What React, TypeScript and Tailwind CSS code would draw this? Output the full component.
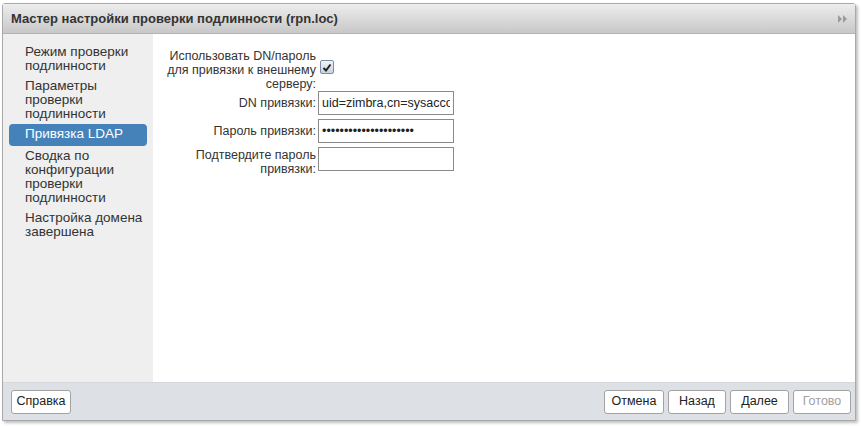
import React from 'react';

const steps = [
  { label: ['Режим проверки', 'подлинности'] },
  { label: ['Параметры', 'проверки', 'подлинности'] },
  { label: ['Привязка LDAP'], active: true },
  { label: ['Сводка по', 'конфигурации', 'проверки', 'подлинности'] },
  { label: ['Настройка домена', 'завершена'] },
];

const Btn: React.FC<{ children: React.ReactNode; disabled?: boolean; w: string }> = ({ children, disabled, w }) => (
  <button
    className={`${w} h-[24px] rounded-[3px] border border-[#a3a3a3] bg-white text-[12.5px] leading-none ${
      disabled ? 'text-[#a0a0a0]' : 'text-[#222]'
    }`}
  >
    {children}
  </button>
);

const inputCls =
  'w-[136px] h-[24px] border border-[#8a8a8a] px-[3px] text-[12.5px] text-[#222] outline-none bg-white';

export default function App() {
  return (
    <div
      className="w-[861px] h-[426px] bg-white pt-[3px] pl-[2px] overflow-hidden"
      style={{ fontFamily: '"Liberation Sans", Arial, sans-serif' }}
    >
      <div className="w-[854px] h-[418px] flex flex-col border border-[#a9a9a9] rounded-t-[3px] shadow-[2px_2px_3px_rgba(0,0,0,0.25)]">
        {/* Title bar */}
        <div className="h-[30px] flex items-center justify-between pl-[8px] pr-[8px] bg-gradient-to-b from-[#ededed] to-[#c8c8c8] border-b border-[#b4b4b4]">
          <span className="text-[13px] font-bold text-[#333]">Мастер настройки проверки подлинности (rpn.loc)</span>
          <svg width="10" height="8" viewBox="0 0 10 8" className="-mr-[1px]">
            <path d="M0 0 L4 4 L0 8 Z" fill="#9a9a9a" />
            <path d="M5 0 L9 4 L5 8 Z" fill="#9a9a9a" />
          </svg>
        </div>

        {/* Body */}
        <div className="flex flex-1 min-h-0">
          <div className="w-[150px] bg-[#efefef] pt-[8px] px-[6px] text-[13.5px] leading-[14px] text-[#333]">
            {steps.map((s) =>
              s.active ? (
                <div key={s.label[0]} className="rounded-[4px] bg-[#4682ba] text-white pl-[16px] pt-[3px] pb-[5px]">
                  {s.label.map((l) => (
                    <div key={l}>{l}</div>
                  ))}
                </div>
              ) : (
                <div key={s.label[0]} className="pl-[16px] py-[3px]">
                  {s.label.map((l) => (
                    <div key={l}>{l}</div>
                  ))}
                </div>
              )
            )}
          </div>

          <div className="flex-1 bg-white pt-[15px] text-[12.5px] leading-[14px] text-[#333]">
            <div className="flex items-center">
              <div className="w-[163px] text-right">
                <div>Использовать DN/пароль</div>
                <div>для привязки к внешнему</div>
                <div>серверу:</div>
              </div>
              <span className="ml-[4px] -translate-y-[3px] w-[14px] h-[14px] rounded-[2px] border border-[#7c8ea6] bg-gradient-to-b from-[#f2f4f8] to-[#c9d2de] flex items-center justify-center">
                <svg width="10" height="9" viewBox="0 0 10 9">
                  <path d="M1.5 5 L4 7.5 L8.5 1.5" fill="none" stroke="#222" strokeWidth="2" />
                </svg>
              </span>
            </div>

            <div className="flex items-center">
              <div className="w-[163px] text-right">DN привязки:</div>
              <input readOnly value="uid=zimbra,cn=sysaccounts,cn=zimbra" className={`ml-[2px] ${inputCls}`} />
            </div>

            <div className="flex items-center mt-[4px]">
              <div className="w-[163px] text-right">Пароль привязки:</div>
              <input readOnly type="password" value="zimbrapassword1234567" className={`ml-[2px] ${inputCls}`} />
            </div>

            <div className="flex items-start mt-[4px]">
              <div className="w-[163px] text-right pt-[1px]">
                <div>Подтвердите пароль</div>
                <div>привязки:</div>
              </div>
              <input readOnly value="" className={`ml-[2px] ${inputCls}`} />
            </div>
          </div>
        </div>

        {/* Footer */}
        <div className="h-[38px] bg-[#dde0e5] flex items-center justify-between pl-[8px] pr-[4px] border-t border-[#d4d7dc]">
          <Btn w="w-[60px]">Справка</Btn>
          <div className="flex gap-[4px]">
            <Btn w="w-[60px]">Отмена</Btn>
            <Btn w="w-[58px]">Назад</Btn>
            <Btn w="w-[59px]">Далее</Btn>
            <Btn w="w-[58px]" disabled>
              Готово
            </Btn>
          </div>
        </div>
      </div>
    </div>
  );
}
